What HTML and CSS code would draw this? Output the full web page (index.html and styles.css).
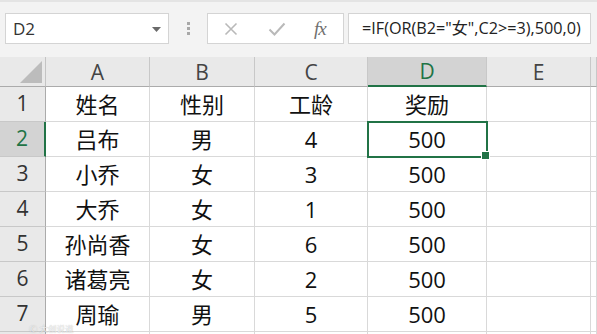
FILE: index.html
```html
<!DOCTYPE html>
<html>
<head>
<meta charset="utf-8">
<link rel="stylesheet" href="styles.css">
</head>
<body>
<div class="app">
  <div class="toolbar">
    <div class="namebox">
      <span class="name">D2</span>
      <svg class="dd" width="9" height="5" viewBox="0 0 9 5"><path d="M0 0h9L4.5 5z" fill="#6a6a6a"/></svg>
    </div>
    <div class="grip"><i></i><i></i><i></i></div>
    <div class="fxbox">
      <svg width="14" height="14" viewBox="0 0 14 14"><path d="M1.5 1.5l11 11M12.5 1.5l-11 11" stroke="#b9b9b9" stroke-width="1.6" fill="none"/></svg>
      <svg width="18" height="14" viewBox="0 0 18 14"><path d="M1.5 7.5l5 5L16.5 1.5" stroke="#b9b9b9" stroke-width="2" fill="none"/></svg>
      <span class="fx">fx</span>
    </div>
    <div class="formula">=IF(OR(B2="女",C2&gt;=3),500,0)</div>
  </div>
  <div class="sheet">
    <div class="corner"><span class="tri"></span></div>
    <div class="ch">A</div>
    <div class="ch">B</div>
    <div class="ch">C</div>
    <div class="ch sel">D</div>
    <div class="ch">E</div>
    <div class="ch"></div>

    <div class="rh">1</div>
    <div class="c">姓名</div><div class="c">性别</div><div class="c">工龄</div><div class="c">奖励</div><div class="c"></div><div class="c"></div>

    <div class="rh sel">2</div>
    <div class="c">吕布</div><div class="c">男</div><div class="c">4</div><div class="c active">500</div><div class="c"></div><div class="c"></div>

    <div class="rh">3</div>
    <div class="c">小乔</div><div class="c">女</div><div class="c">3</div><div class="c">500</div><div class="c"></div><div class="c"></div>

    <div class="rh">4</div>
    <div class="c">大乔</div><div class="c">女</div><div class="c">1</div><div class="c">500</div><div class="c"></div><div class="c"></div>

    <div class="rh">5</div>
    <div class="c">孙尚香</div><div class="c">女</div><div class="c">6</div><div class="c">500</div><div class="c"></div><div class="c"></div>

    <div class="rh">6</div>
    <div class="c">诸葛亮</div><div class="c">女</div><div class="c">2</div><div class="c">500</div><div class="c"></div><div class="c"></div>

    <div class="rh">7</div>
    <div class="c">周瑜</div><div class="c">男</div><div class="c">5</div><div class="c">500</div><div class="c"></div><div class="c"></div>

    <div class="rh"></div>
    <div class="c"></div><div class="c"></div><div class="c"></div><div class="c"></div><div class="c"></div><div class="c"></div>
  </div>
  <div class="watermark">Ⓒ 大创说道</div>
</div>
</body>
</html>
```

FILE: styles.css
```css
* { box-sizing: border-box; }
html, body { margin: 0; padding: 0; }
body {
  width: 597px;
  height: 334px;
  overflow: hidden;
  background: #fff;
  font-family: "Open Sans", "Noto Sans CJK SC", sans-serif;
}
.app { position: relative; width: 597px; height: 334px; overflow: hidden; }

.toolbar {
  height: 57px;
  background: #f3f3f3;
  border-top: 2px solid #e4e4e4;
  display: flex;
  align-items: flex-start;
  padding: 11px 0 0 5px;
}
.namebox {
  width: 164px;
  height: 31px;
  background: #fff;
  border: 1px solid #d4d4d4;
  display: flex;
  align-items: center;
  justify-content: space-between;
  padding: 0 7px 0 7px;
}
.name { font-size: 17px; color: #333; }
.dd { margin-top: 1px; }
.grip {
  width: 38px;
  height: 31px;
  display: flex;
  flex-direction: column;
  align-items: center;
  justify-content: center;
  gap: 2px;
}
.grip i { display: block; width: 3px; height: 3px; background: #a8a8a8; }
.fxbox {
  width: 137px;
  height: 31px;
  background: #fff;
  border: 1px solid #d4d4d4;
  display: flex;
  align-items: center;
  padding-left: 16px;
  gap: 30px;
}
.fx {
  font-family: "Liberation Serif", serif;
  font-style: italic;
  font-size: 19px;
  color: #707070;
  margin-left: -2px;
  letter-spacing: -1px;
}
.formula {
  margin-left: 4px;
  width: 243px;
  height: 31px;
  background: #fff;
  border: 1px solid #d4d4d4;
  font-size: 16.2px;
  color: #222;
  padding-left: 13px;
  line-height: 29px;
  white-space: nowrap;
}

.sheet {
  display: grid;
  grid-template-columns: 46px 104px 105px 113px 119px 104px 1fr;
  grid-template-rows: 30px repeat(8, 35px);
}
.corner {
  background: #e9e9e9;
  border-right: 1px solid #c4c4c4;
  border-bottom: 1px solid #ababab;
  position: relative;
}
.tri {
  position: absolute;
  right: 3px;
  bottom: 3px;
  width: 0;
  height: 0;
  border-left: 22px solid transparent;
  border-bottom: 22px solid #bcbcbc;
}
.ch {
  background: #e9e9e9;
  border-right: 1px solid #c8c8c8;
  border-bottom: 1px solid #ababab;
  display: flex;
  align-items: center;
  justify-content: center;
  font-size: 21px;
  color: #444;
}
.ch.sel {
  background: #d3d3d3;
  border-bottom: 2px solid #217346;
  color: #217346;
}
.rh {
  background: #e9e9e9;
  border-right: 1px solid #ababab;
  border-bottom: 1px solid #c8c8c8;
  display: flex;
  align-items: center;
  justify-content: center;
  font-size: 21px;
  line-height: 0.75;
  color: #333;
}
.rh.sel {
  background: #d3d3d3;
  border-right: 2px solid #217346;
  color: #217346;
}
.c {
  border-right: 1px solid #d9d9d9;
  border-bottom: 1px solid #d9d9d9;
  display: flex;
  align-items: center;
  justify-content: center;
  font-size: 22px;
  line-height: 1.1;
  color: #111;
}
.c.active {
  position: relative;
  outline: 2px solid #217346;
  outline-offset: -1px;
}
.c.active::after {
  content: "";
  position: absolute;
  right: -4px;
  bottom: -4px;
  width: 7px;
  height: 7px;
  background: #217346;
  border: 1px solid #fff;
}
.watermark {
  position: absolute;
  left: 29px;
  bottom: 1px;
  font-family: "Noto Sans CJK SC", sans-serif;
  font-size: 8.5px;
  line-height: 10px;
  white-space: nowrap;
  color: rgba(255,255,255,0.85);
  text-shadow: 0 0 1px rgba(0,0,0,0.35);
}
```
